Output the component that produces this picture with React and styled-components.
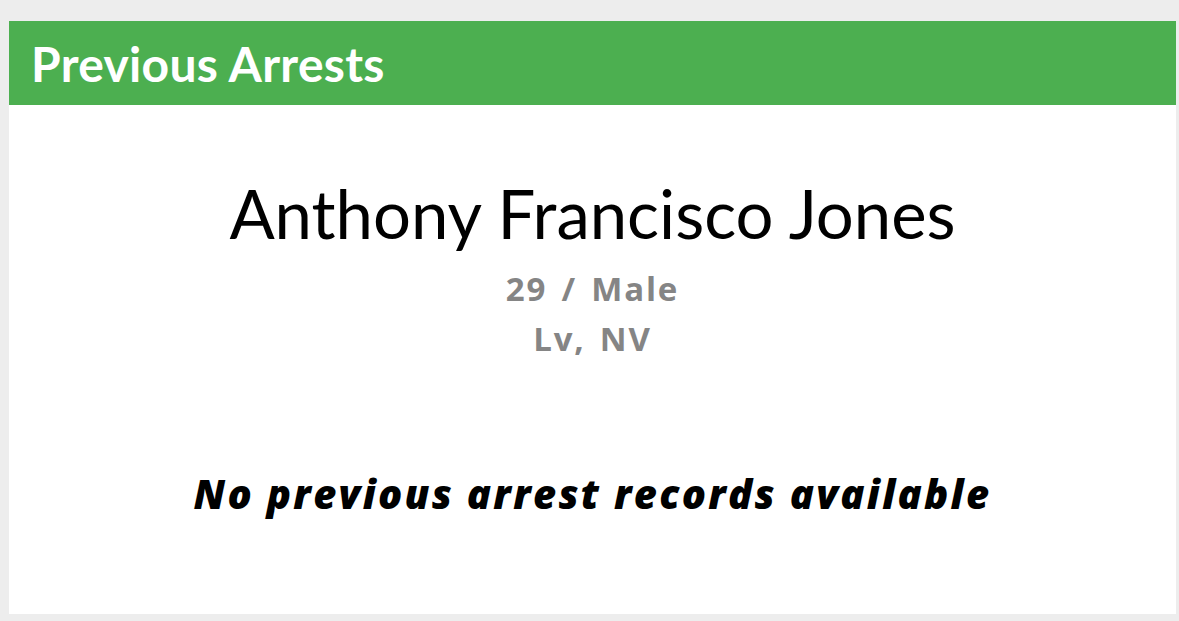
import React from 'react';
import styled, { createGlobalStyle } from 'styled-components';

const GlobalStyle = createGlobalStyle`
    html, body {
        margin: 0;
        padding: 0;
        background-color: #ededed;
    }
    body {
        font-family: Lato, "Liberation Sans", sans-serif;
    }
`;

const Page = styled.div`
    padding: 21px 3px 7px 9px;
`;

const Card = styled.section`
    background-color: #ffffff;
    height: 593px;
    display: flex;
    flex-direction: column;
`;

const CardHeader = styled.header`
    background-color: #4caf50;
    height: 84px;
    display: flex;
    align-items: center;
    padding: 0 22px;
`;

const HeaderTitle = styled.h2`
    margin: 0;
    color: #ffffff;
    font-family: Lato, sans-serif;
    font-weight: 700;
    font-size: 48px;
    letter-spacing: 0.3px;
`;

const CardBody = styled.div`
    display: flex;
    flex-direction: column;
    align-items: center;
    padding-top: 68px;
`;

const Name = styled.h1`
    margin: 0;
    font-family: Lato, sans-serif;
    font-weight: 400;
    font-size: 67px;
    line-height: 80px;
    color: #000000;
`;

const MetaGroup = styled.div`
    display: flex;
    flex-direction: column;
    align-items: center;
    margin-top: 11px;
`;

const Meta = styled.p`
    margin: 0;
    font-family: "Open Sans", sans-serif;
    font-weight: 700;
    font-size: 33px;
    line-height: 50px;
    letter-spacing: 1.8px;
    word-spacing: 4px;
    color: #858585;
`;

const EmptyNotice = styled.p`
    margin: 102px 0 0;
    font-family: "Open Sans", sans-serif;
    font-style: italic;
    font-weight: 800;
    font-size: 40px;
    letter-spacing: 2.3px;
    color: #000000;
`;

const App = () => (
    <>
        <GlobalStyle />
        <Page>
            <Card>
                <CardHeader>
                    <HeaderTitle>Previous Arrests</HeaderTitle>
                </CardHeader>
                <CardBody>
                    <Name>Anthony Francisco Jones</Name>
                    <MetaGroup>
                        <Meta>29 / Male</Meta>
                        <Meta>Lv, NV</Meta>
                    </MetaGroup>
                    <EmptyNotice>No previous arrest records available</EmptyNotice>
                </CardBody>
            </Card>
        </Page>
    </>
);

export default App;
